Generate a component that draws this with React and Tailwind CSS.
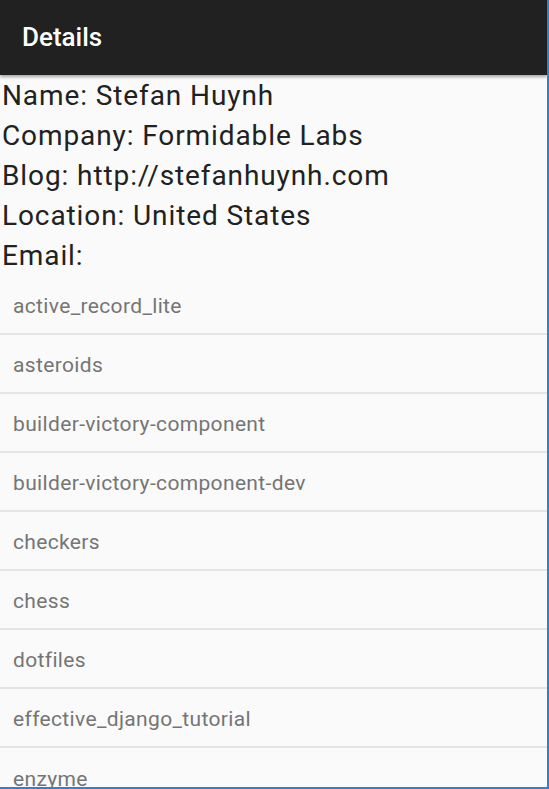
import React from "react";

const profile = [
  "Name: Stefan Huynh",
  "Company: Formidable Labs",
  "Blog: http://stefanhuynh.com",
  "Location: United States",
  "Email:",
];

const repos = [
  "active_record_lite",
  "asteroids",
  "builder-victory-component",
  "builder-victory-component-dev",
  "checkers",
  "chess",
  "dotfiles",
  "effective_django_tutorial",
  "enzyme",
];

const App = () => {
  return (
    <div className="h-[789px] w-[549px] overflow-hidden border-r-2 border-b-2 border-[#2f7fd3] bg-[#fafafa] font-['Roboto',sans-serif]">
      {/* toolbar */}
      <div className="relative z-10 flex h-[75px] items-center bg-[#212121] px-[22px] shadow-[0_2px_3px_rgba(0,0,0,0.35)]">
        <span className="text-[26px] font-medium text-white">Details</span>
      </div>

      <div className="pt-[1px] pl-[2px]">
        {profile.map((line) => (
          <div key={line} className="text-[28px] leading-[40px] tracking-[0.9px] text-[#212121]">
            {line}
          </div>
        ))}
      </div>

      <div className="flex flex-col">
        {repos.map((name, i) => (
          <div
            key={name}
            className={
              "flex h-[59px] shrink-0 items-center px-[13px] pt-[4px] text-[21px] tracking-[0.35px] text-[#757575] " +
              (i < repos.length - 1 ? "border-b-2 border-[#e5e5e5]" : "")
            }
          >
            {name}
          </div>
        ))}
      </div>
    </div>
  );
};

export default App;
